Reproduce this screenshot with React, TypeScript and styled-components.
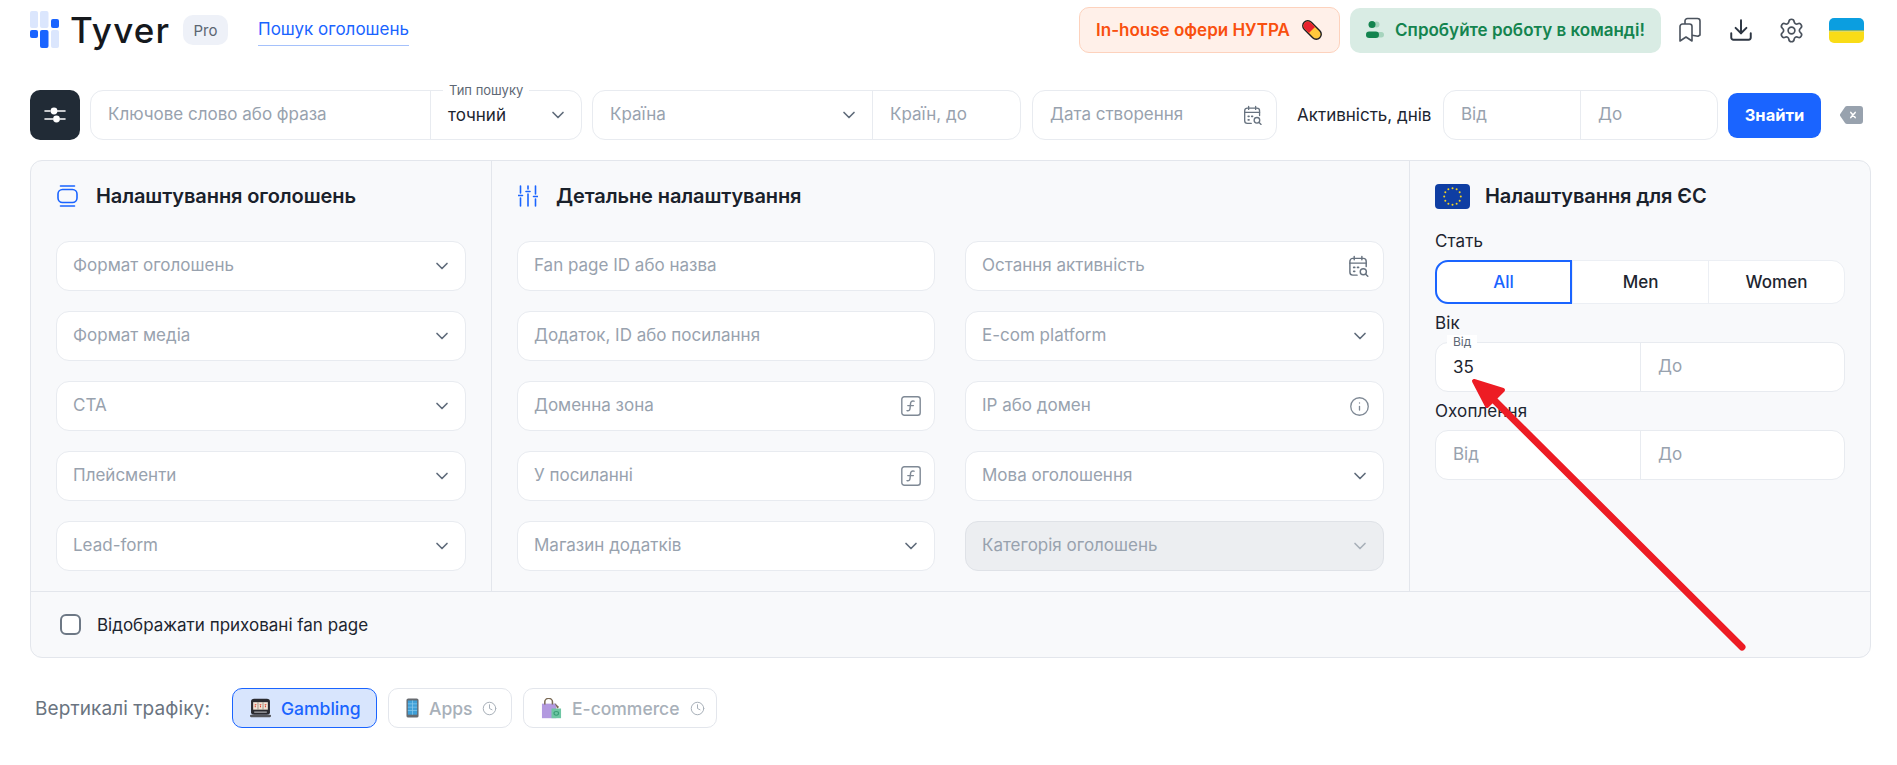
import React from "react";
import styled, { createGlobalStyle } from "styled-components";
import { ChevronDown, Clock, Download, Info, Settings } from "lucide-react";

const GlobalStyle = createGlobalStyle`
  html, body {
    margin: 0;
    padding: 0;
    background: #fff;
  }
  body {
    font-family: Inter, "Noto Sans", sans-serif;
    color: #1d2530;
  }
  * {
    box-sizing: border-box;
  }
`;

const Page = styled.div`
  position: relative;
  width: 1897px;
  height: 765px;
  overflow: hidden;
  padding: 0 26px 0 30px;
`;

const Header = styled.header`
  display: flex;
  align-items: center;
  height: 60px;
`;

const Logo = styled.div`
  display: flex;
  align-items: center;
  gap: 10px;
  width: 153px;
`;

const LogoText = styled.span`
  font-size: 35px;
  font-weight: 500;
  letter-spacing: 1.2px;
  color: #15181d;
  line-height: 1;
`;

const ProBadge = styled.span`
  display: flex;
  align-items: center;
  justify-content: center;
  width: 45px;
  height: 30px;
  border-radius: 10px;
  background: #eef1f8;
  color: #5c6672;
  font-size: 15px;
`;

const NavLink = styled.a`
  margin-left: 30px;
  height: 31px;
  padding-top: 4px;
  border-bottom: 1px solid #a5c1fb;
  color: #1a64ff;
  font-size: 17px;
`;

const HeaderRight = styled.div`
  margin-left: auto;
  padding-right: 7px;
  display: flex;
  align-items: center;
`;

const Promo = styled.a<{ $tone: "orange" | "green" }>`
  display: flex;
  align-items: center;
  justify-content: center;
  gap: 11px;
  height: ${(p) => (p.$tone === "orange" ? "46px" : "45px")};
  width: ${(p) => (p.$tone === "orange" ? "261px" : "311px")};
  margin-right: ${(p) => (p.$tone === "orange" ? "10px" : "15px")};
  border-radius: 10px;
  font-size: 17px;
  font-weight: 600;
  white-space: nowrap;
  background: ${(p) => (p.$tone === "orange" ? "#fff0e9" : "#d9ece4")};
  border: ${(p) => (p.$tone === "orange" ? "1px solid #fdd2bd" : "none")};
  color: ${(p) => (p.$tone === "orange" ? "#f9500f" : "#14844f")};
`;

const IconSlot = styled.span<{ $width: number }>`
  display: flex;
  align-items: center;
  justify-content: center;
  width: ${(p) => p.$width}px;
  color: #3f4854;
`;

const FlagSlot = styled.span`
  display: flex;
  justify-content: flex-end;
  width: 59px;
`;

const SearchRow = styled.div`
  display: flex;
  align-items: center;
  margin-top: 30px;
  height: 50px;
`;

const FilterButton = styled.button`
  display: flex;
  align-items: center;
  justify-content: center;
  width: 50px;
  height: 50px;
  margin-right: 10px;
  padding: 0;
  border: none;
  border-radius: 10px;
  background: #212b36;
`;

const Group = styled.div<{ $width?: number; $gap?: number }>`
  display: flex;
  position: relative;
  width: ${(p) => (p.$width ? `${p.$width}px` : "100%")};
  margin-right: ${(p) => p.$gap ?? 0}px;
  height: 50px;
  flex: none;
  background: #fff;
  border: 1px solid #e8ebf0;
  border-radius: 13px;
`;

const Cell = styled.div<{ $width?: number; $pad?: number }>`
  display: flex;
  position: relative;
  align-items: center;
  justify-content: space-between;
  width: ${(p) => (p.$width ? `${p.$width}px` : "auto")};
  flex: ${(p) => (p.$width ? "none" : "1")};
  padding: 0 13px 0 ${(p) => p.$pad ?? 17}px;
  & + & {
    border-left: 1px solid #e8ebf0;
  }
`;

const Placeholder = styled.span`
  color: #98a2ae;
  font-size: 17px;
  line-height: 22px;
  margin-top: -2px;
  white-space: nowrap;
`;

const Value = styled.span`
  color: #1d2530;
  font-size: 17px;
`;

const Legend = styled.span<{ $small?: boolean }>`
  position: absolute;
  top: -8px;
  left: ${(p) => (p.$small ? "11px" : "12px")};
  padding: 0 6px;
  font-size: ${(p) => (p.$small ? "12px" : "13px")};
  line-height: 14px;
  color: #5e6875;
  background: #fff;
`;

const ActivityLabel = styled.span`
  width: 146px;
  margin-left: 20px;
  font-size: 17px;
  white-space: nowrap;
`;

const FindButton = styled.button`
  width: 93px;
  height: 45px;
  margin-left: 10px;
  border: none;
  border-radius: 9px;
  background: #1a64ff;
  color: #fff;
  font-family: inherit;
  font-size: 16.5px;
  font-weight: 700;
`;

const ClearSlot = styled.span`
  display: flex;
  margin-left: 19px;
`;

const Panel = styled.section`
  margin-top: 20px;
  height: 498px;
  background: #f8f9fb;
  border: 1px solid #e3e6ec;
  border-radius: 12px;
`;

const PanelColumns = styled.div`
  display: grid;
  grid-template-columns: 461px 918px 1fr;
  height: 431px;
  border-bottom: 1px solid #e3e6ec;
`;

const Column = styled.div<{ $last?: boolean }>`
  padding: 23px 25px 0 25px;
  border-right: ${(p) => (p.$last ? "none" : "1px solid #e3e6ec")};
`;

const ColumnTitle = styled.h3<{ $flag?: boolean }>`
  display: flex;
  align-items: center;
  gap: ${(p) => (p.$flag ? "15px" : "18px")};
  height: 24px;
  margin: 0;
  padding-left: ${(p) => (p.$flag ? "0" : "1px")};
  font-size: 20px;
  font-weight: 600;
  letter-spacing: -0.1px;
  white-space: nowrap;
  color: #1a212b;
`;

const FieldStack = styled.div`
  display: grid;
  row-gap: 20px;
  margin-top: 33px;
`;

const FieldGrid = styled(FieldStack)`
  grid-template-columns: 418px 419px;
  column-gap: 30px;
`;

const Field = styled.div<{ $disabled?: boolean }>`
  display: flex;
  align-items: center;
  justify-content: space-between;
  height: 50px;
  padding: 0 13px 0 16px;
  background: ${(p) => (p.$disabled ? "#eceef1" : "#fff")};
  border: 1px solid ${(p) => (p.$disabled ? "#dfe2e7" : "#e8ebf0")};
  border-radius: 13px;
`;

const FieldLabel = styled.div<{ $top: number }>`
  margin: ${(p) => p.$top}px 0 0;
  height: 22px;
  font-size: 17px;
  line-height: 22px;
  letter-spacing: 0.1px;
  color: #1d2530;
`;

const Segments = styled.div`
  display: grid;
  grid-template-columns: repeat(3, 1fr);
  height: 44px;
  margin-top: 8px;
  background: #fff;
  border: 1px solid #eceff4;
  border-radius: 13px;
`;

const Segment = styled.div<{ $active?: boolean }>`
  display: flex;
  align-items: center;
  justify-content: center;
  margin: ${(p) => (p.$active ? "-1px 0 -1px -1px" : "0")};
  font-size: 17px;
  font-weight: 500;
  color: ${(p) => (p.$active ? "#1a64ff" : "#1d2530")};
  border: ${(p) => (p.$active ? "2px solid #1a64ff" : "none")};
  border-radius: ${(p) => (p.$active ? "13px 0 0 13px" : "0")};
  & + & {
    border-left: 1px solid #eceff4;
  }
`;

const RangeGroup = styled(Group)`
  margin-top: 8px;
`;

const HiddenRow = styled.label`
  display: flex;
  align-items: center;
  height: 65px;
  padding-left: 29px;
  gap: 16px;
  font-size: 17px;
`;

const CheckBox = styled.span`
  width: 21px;
  height: 21px;
  border: 2px solid #6d7885;
  border-radius: 6px;
  background: #fff;
`;

const TrafficRow = styled.div`
  display: flex;
  align-items: center;
  margin-top: 30px;
  height: 40px;
`;

const TrafficLabel = styled.span`
  margin-left: 5px;
  width: 197px;
  color: #6a7480;
  font-size: 19px;
  letter-spacing: 0.1px;
  white-space: nowrap;
`;

const Chip = styled.button<{ $active?: boolean; $width: number }>`
  display: flex;
  align-items: center;
  gap: 10px;
  width: ${(p) => p.$width}px;
  height: 40px;
  margin-right: 11px;
  padding: 0 0 0 17px;
  border-radius: 10px;
  border: 1px solid ${(p) => (p.$active ? "#1a64ff" : "#e3e6ec")};
  background: ${(p) => (p.$active ? "#d8e5fd" : "#fff")};
  color: ${(p) => (p.$active ? "#1a64ff" : "#a8b0b9")};
  font-family: inherit;
  font-size: 17.5px;
  font-weight: 500;
`;

const ArrowOverlay = styled.svg`
  position: absolute;
  left: 0;
  top: 0;
  pointer-events: none;
`;

const LogoMark = () => (
  <svg width="30" height="38" viewBox="0 0 30 38">
    <rect x="0" y="0" width="8" height="17" rx="2" fill="#dbe6fd" />
    <rect x="0" y="19" width="8" height="8" rx="2" fill="#1a64ff" />
    <rect x="10" y="0" width="8.5" height="17" rx="2" fill="#dbe6fd" />
    <rect x="10" y="19" width="8.5" height="18" rx="2" fill="#1a64ff" />
    <rect x="21" y="8" width="8" height="9" rx="2" fill="#1a64ff" />
    <rect x="21" y="19" width="8" height="18" rx="2" fill="#dbe6fd" />
  </svg>
);

const PillIcon = () => (
  <svg width="22" height="24" viewBox="0 0 22 24">
    <g transform="rotate(-45 11 12)">
      <rect x="6" y="1" width="10" height="22" rx="5" fill="#ffc83d" stroke="#1d1d22" strokeWidth="1.4" />
      <path d="M6.7 12V6a4.3 4.3 0 0 1 8.6 0v6z" fill="#e8212e" />
    </g>
  </svg>
);

const TeamIcon = () => (
  <svg width="18" height="18" viewBox="0 0 18 18">
    <circle cx="10.5" cy="3.5" r="3" fill="#a6d4bd" />
    <rect x="7" y="11" width="11" height="5.5" rx="2.7" fill="#a6d4bd" />
    <circle cx="6" cy="3.5" r="3.5" fill="#14844f" />
    <rect x="0" y="10.5" width="13" height="6.5" rx="3.2" fill="#14844f" />
  </svg>
);

const BookmarksIcon = () => (
  <svg width="24" height="26" viewBox="0 0 24 26" fill="none" stroke="#4a525d" strokeWidth="1.6" strokeLinejoin="round">
    <path d="M2 9.5a2.5 2.5 0 0 1 2.5-2.5h7a2.5 2.5 0 0 1 2.5 2.5V24l-6-4-6 4z" />
    <path d="M7 7V4a2.5 2.5 0 0 1 2.5-2.5h10A2.5 2.5 0 0 1 22 4v14l-2 1.2-6-1" />
  </svg>
);

const UkraineFlag = () => (
  <svg width="35" height="25" viewBox="0 0 35 25">
    <clipPath id="ua-clip">
      <rect width="35" height="25" rx="5" />
    </clipPath>
    <g clipPath="url(#ua-clip)">
      <rect width="35" height="12" fill="#0b9ee0" />
      <rect y="12" width="35" height="1.5" fill="#8bb66a" />
      <rect y="13.5" width="35" height="11.5" fill="#f9dc17" />
    </g>
  </svg>
);

const SlidersButtonIcon = () => (
  <svg width="22" height="22" viewBox="0 0 22 22" fill="none" stroke="#fff" strokeWidth="1.6" strokeLinecap="round">
    <path d="M1 7h5M13 7h8M1 15h8M16 15h5" />
    <circle cx="10" cy="7" r="3.4" fill="#fff" stroke="none" />
    <circle cx="12.5" cy="15" r="3.4" fill="#fff" stroke="none" />
  </svg>
);

const CalendarSearchIcon = ({ size = 22 }: { size?: number }) => (
  <svg width={size} height={size + 1} viewBox="0 0 22 24" fill="none" stroke="#67727f" strokeWidth="1.5" strokeLinecap="round">
    <path d="M9 21H4.5A3 3 0 0 1 1.5 18V6.5a3 3 0 0 1 3-3h11a3 3 0 0 1 3 3V12" />
    <path d="M1.5 8.5h17M6 1.5v3.5M14 1.5v3.5" />
    <path d="M5.5 13h1M5.5 17h1M9.5 13h1" strokeWidth="1.8" />
    <circle cx="15.5" cy="17.5" r="3.2" />
    <path d="M18 20l2.2 2.2" />
  </svg>
);

const BackspaceIcon = () => (
  <svg width="23" height="18" viewBox="0 0 23 18">
    <path d="M7 0h13a3 3 0 0 1 3 3v12a3 3 0 0 1-3 3H7a2.5 2.5 0 0 1-1.8-.8L.6 10.4a2 2 0 0 1 0-2.8L5.2.8A2.5 2.5 0 0 1 7 0z" fill="#98a2ae" />
    <path d="M10.8 6.4l4.4 5.2M15.2 6.4l-4.4 5.2" stroke="#fff" strokeWidth="1.5" strokeLinecap="round" />
  </svg>
);

const AdFormatIcon = () => (
  <svg width="21" height="22" viewBox="0 0 21 22" fill="none" stroke="#1a64ff" strokeWidth="1.6" strokeLinecap="round">
    <path d="M3.5 1h14M3.5 21h14" />
    <rect x="1" y="4.5" width="19" height="13" rx="4.5" />
  </svg>
);

const TuneIcon = () => (
  <svg width="20" height="22" viewBox="0 0 20 22" fill="none" stroke="#1a64ff" strokeWidth="1.6" strokeLinecap="round">
    <path d="M2.5 1v7M2.5 13v8M10 1v3M10 9v12M17.5 1v8M17.5 14v7" />
    <path d="M0.5 10.5h4M8 6.5h4M15.5 11.5h4" />
  </svg>
);

const EuFlag = () => {
  const stars = Array.from({ length: 12 }, (_, i) => {
    const a = (i * Math.PI) / 6;
    return { x: 17.5 + 8.3 * Math.sin(a), y: 12.5 - 8.3 * Math.cos(a) };
  });
  return (
    <svg width="35" height="25" viewBox="0 0 35 25">
      <rect width="35" height="25" rx="4" fill="#0f3ea3" />
      {stars.map((s, i) => (
        <circle key={i} cx={s.x} cy={s.y} r="1" fill="#f4d21f" />
      ))}
    </svg>
  );
};

const FunctionIcon = () => (
  <svg width="20" height="20" viewBox="0 0 20 20" fill="none" stroke="#7f8995" strokeWidth="1.4" strokeLinecap="round">
    <rect x="0.8" y="0.8" width="18.4" height="18.4" rx="2.5" />
    <path d="M13 5.2c-2-.6-3.2.2-3.4 2l-.6 5.4c-.2 1.8-1.4 2.6-3 2M6.8 9.6h5.6" />
  </svg>
);

const SlotIcon = () => (
  <svg width="21" height="20" viewBox="0 0 20 24" preserveAspectRatio="none">
    <rect x="1" y="1" width="18" height="19" rx="3" fill="#2b2b30" />
    <rect x="3" y="5" width="14" height="9" fill="#f1e3d4" />
    <path d="M7.6 5v9M12.4 5v9" stroke="#8a7c72" strokeWidth="0.8" />
    <path d="M4.5 8h1.6M9.2 8h1.6M14 8h1.6M5 11v-2M10 11v-2M14.7 11v-2" stroke="#e0412f" strokeWidth="1" />
    <rect x="4" y="16" width="12" height="2" fill="#8b8b90" />
    <rect x="0" y="20" width="20" height="3" rx="1" fill="#55565b" />
  </svg>
);

const PhoneIcon = () => (
  <svg width="13" height="20" viewBox="0 0 14 24" preserveAspectRatio="none">
    <rect x="0.5" y="0.5" width="13" height="23" rx="2" fill="#676b70" />
    <rect x="2" y="3" width="10" height="17" fill="#3fa0d8" />
    <path d="M2 7h10M2 11h10M2 15h10M7 3v17" stroke="#8ccbee" strokeWidth="0.8" />
  </svg>
);

const BagIcon = () => (
  <svg width="21" height="21" viewBox="0 0 22 26" preserveAspectRatio="none">
    <rect x="1" y="7" width="15" height="18" fill="#b39ae0" />
    <path d="M4 8V4.5a4 4 0 0 1 8 0V8" fill="none" stroke="#7a6a55" strokeWidth="1.6" />
    <rect x="11" y="13" width="10" height="12" fill="#6fc6a4" />
    <circle cx="16" cy="19" r="2.4" fill="none" stroke="#3a9d78" strokeWidth="1.2" />
    <path d="M14 6l5 5-2 2z" fill="#7a6a55" />
  </svg>
);

const Chevron = () => <ChevronDown size={20} color="#5f6b7a" strokeWidth={2} />;

const SmallClock = () => <Clock size={15} color="#a8b0b9" strokeWidth={1.6} />;

const SelectField = ({ label }: { label: string }) => (
  <Field>
    <Placeholder>{label}</Placeholder>
    <Chevron />
  </Field>
);

const IconField = ({ label, icon }: { label: string; icon?: React.ReactNode }) => (
  <Field>
    <Placeholder>{label}</Placeholder>
    {icon}
  </Field>
);

export default function App() {
  return (
    <Page>
      <GlobalStyle />
      <Header>
        <Logo>
          <LogoMark />
          <LogoText>Tyver</LogoText>
        </Logo>
        <ProBadge>Pro</ProBadge>
        <NavLink>Пошук оголошень</NavLink>
        <HeaderRight>
          <Promo $tone="orange">
            In-house офери НУТРА
            <PillIcon />
          </Promo>
          <Promo $tone="green">
            <TeamIcon />
            Спробуйте роботу в команді!
          </Promo>
          <IconSlot $width={28}>
            <BookmarksIcon />
          </IconSlot>
          <IconSlot $width={73}>
            <Download size={26} strokeWidth={1.8} color="#2c3542" />
          </IconSlot>
          <IconSlot $width={28}>
            <Settings size={27} strokeWidth={1.5} color="#4a525d" />
          </IconSlot>
          <FlagSlot>
            <UkraineFlag />
          </FlagSlot>
        </HeaderRight>
      </Header>

      <SearchRow>
        <FilterButton>
          <SlidersButtonIcon />
        </FilterButton>
        <Group $width={492} $gap={10}>
          <Cell $width={339}>
            <Placeholder>Ключове слово або фраза</Placeholder>
          </Cell>
          <Cell>
            <Legend>Тип пошуку</Legend>
            <Value>точний</Value>
            <Chevron />
          </Cell>
        </Group>
        <Group $width={429} $gap={11}>
          <Cell $width={279}>
            <Placeholder>Країна</Placeholder>
            <Chevron />
          </Cell>
          <Cell>
            <Placeholder>Країн, до</Placeholder>
          </Cell>
        </Group>
        <Group $width={245}>
          <Cell>
            <Placeholder>Дата створення</Placeholder>
            <CalendarSearchIcon size={20} />
          </Cell>
        </Group>
        <ActivityLabel>Активність, днів</ActivityLabel>
        <Group $width={275}>
          <Cell $width={136}>
            <Placeholder>Від</Placeholder>
          </Cell>
          <Cell>
            <Placeholder>До</Placeholder>
          </Cell>
        </Group>
        <FindButton>Знайти</FindButton>
        <ClearSlot>
          <BackspaceIcon />
        </ClearSlot>
      </SearchRow>

      <Panel>
        <PanelColumns>
          <Column>
            <ColumnTitle>
              <AdFormatIcon />
              Налаштування оголошень
            </ColumnTitle>
            <FieldStack>
              {["Формат оголошень", "Формат медіа", "СТА", "Плейсменти", "Lead-form"].map((label) => (
                <SelectField key={label} label={label} />
              ))}
            </FieldStack>
          </Column>
          <Column>
            <ColumnTitle>
              <TuneIcon />
              Детальне налаштування
            </ColumnTitle>
            <FieldGrid>
              <IconField label="Fan page ID або назва" />
              <IconField label="Остання активність" icon={<CalendarSearchIcon />} />
              <IconField label="Додаток, ID або посилання" />
              <SelectField label="E-com platform" />
              <IconField label="Доменна зона" icon={<FunctionIcon />} />
              <IconField label="IP або домен" icon={<Info size={21} color="#7f8995" strokeWidth={1.5} />} />
              <IconField label="У посиланні" icon={<FunctionIcon />} />
              <SelectField label="Мова оголошення" />
              <SelectField label="Магазин додатків" />
              <Field $disabled>
                <Placeholder>Категорія оголошень</Placeholder>
                <ChevronDown size={20} color="#a8b0b9" strokeWidth={2} />
              </Field>
            </FieldGrid>
          </Column>
          <Column $last>
            <ColumnTitle $flag>
              <EuFlag />
              Налаштування для ЄС
            </ColumnTitle>
            <FieldLabel $top={22}>Стать</FieldLabel>
            <Segments>
              <Segment $active>All</Segment>
              <Segment>Men</Segment>
              <Segment>Women</Segment>
            </Segments>
            <FieldLabel $top={8}>Вік</FieldLabel>
            <RangeGroup>
              <Cell $width={204}>
                <Legend $small>Від</Legend>
                <Value>35</Value>
              </Cell>
              <Cell>
                <Placeholder>До</Placeholder>
              </Cell>
            </RangeGroup>
            <FieldLabel $top={8}>Охоплення</FieldLabel>
            <RangeGroup>
              <Cell $width={204}>
                <Placeholder>Від</Placeholder>
              </Cell>
              <Cell>
                <Placeholder>До</Placeholder>
              </Cell>
            </RangeGroup>
          </Column>
        </PanelColumns>
        <HiddenRow>
          <CheckBox />
          Відображати приховані fan page
        </HiddenRow>
      </Panel>

      <TrafficRow>
        <TrafficLabel>Вертикалі трафіку:</TrafficLabel>
        <Chip $active $width={145}>
          <SlotIcon />
          Gambling
        </Chip>
        <Chip $width={124}>
          <PhoneIcon />
          Apps
          <SmallClock />
        </Chip>
        <Chip $width={194}>
          <BagIcon />
          E-commerce
          <SmallClock />
        </Chip>
      </TrafficRow>

      <ArrowOverlay width="1897" height="765" viewBox="0 0 1897 765">
        <path d="M1742 647L1480 386" stroke="#ed1c24" strokeWidth="7" strokeLinecap="round" />
        <path d="M1474 381L1503 390L1487 406Z" fill="#ed1c24" stroke="#ed1c24" strokeWidth="4" strokeLinejoin="round" />
      </ArrowOverlay>
    </Page>
  );
}
